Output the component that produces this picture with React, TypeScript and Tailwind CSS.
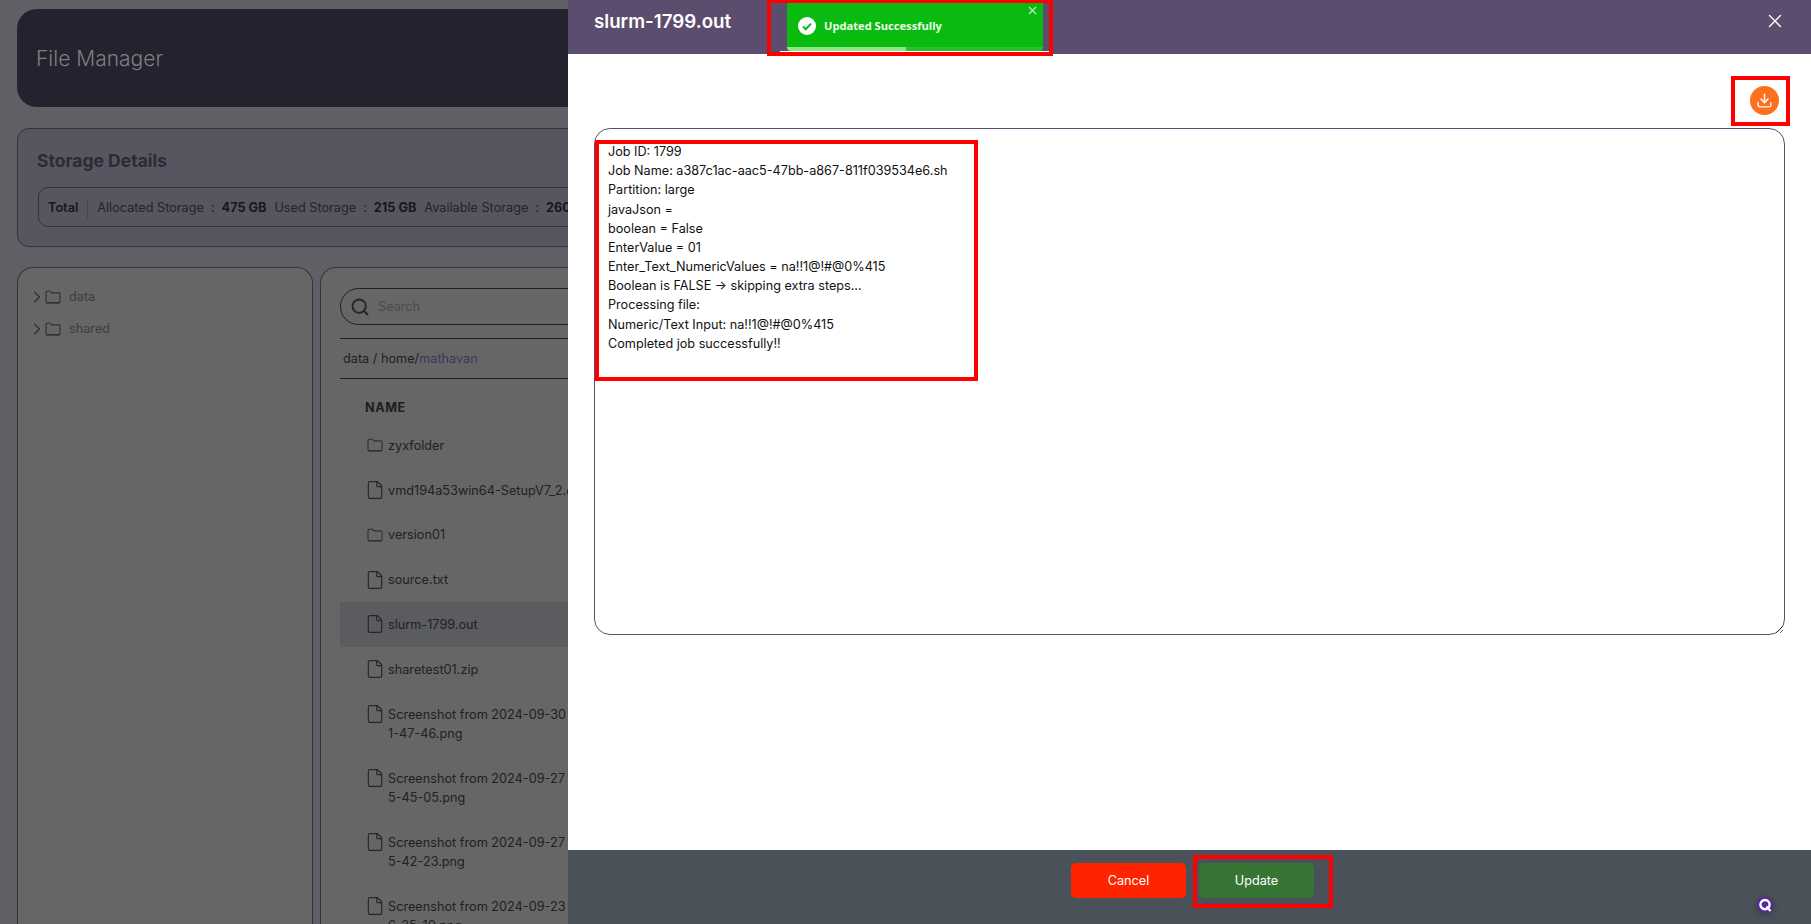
import { ChevronRight, Download, File, Search, X } from "lucide-react";

const jobLog = `Job ID: 1799
Job Name: a387c1ac-aac5-47bb-a867-811f039534e6.sh
Partition: large
javaJson =
boolean = False
EnterValue = 01
Enter_Text_NumericValues = na!!1@!#@0%415
Boolean is FALSE → skipping extra steps...
Processing file:
Numeric/Text Input: na!!1@!#@0%415
Completed job successfully!!
`;

const files = [
  { name: ["zyxfolder"], folder: true },
  { name: ["vmd194a53win64-SetupV7_2.exe"] },
  { name: ["version01"], folder: true },
  { name: ["source.txt"] },
  { name: ["slurm-1799.out"], active: true },
  { name: ["sharetest01.zip"] },
  { name: ["Screenshot from 2024-09-30 1", "1-47-46.png"] },
  { name: ["Screenshot from 2024-09-27 1", "5-45-05.png"] },
  { name: ["Screenshot from 2024-09-27 1", "5-42-23.png"] },
  { name: ["Screenshot from 2024-09-23 1", "6-25-10.png"] },
];

const FolderIcon = () => (
  <svg width="16" height="14" viewBox="0 0 16 14" fill="none" stroke="#2f2f36" strokeWidth="1.1" className="shrink-0">
    <path d="M1 2.2c0-.6.4-1 1-1h3.6l1.2 1.7H14c.6 0 1 .4 1 1v7.9c0 .6-.4 1-1 1H2c-.6 0-1-.4-1-1z" />
    <path d="M1.4 12.9h13.2" strokeWidth="1.3" />
  </svg>
);

const StorageItem = ({ label, value }: { label: string; value: string }) => (
  <span className="flex items-center gap-[6px] mr-[8px] whitespace-nowrap">
    <span className="text-[#232328]">{label}</span>
    <span className="text-[#232328] mx-px">:</span>
    <span className="font-bold text-[#17171b]">{value}</span>
  </span>
);

const Annotation = ({ className }: { className: string }) => (
  <div className={`absolute border-4 border-[#ff0000] pointer-events-none ${className}`} />
);

export default function App() {
  return (
    <div className="relative h-[924px] w-full overflow-hidden bg-[#5f5f66] font-['Inter',sans-serif]">
      {/* page behind the drawer */}
      <div className="flex h-full flex-col pl-[17px] pt-[9px] pr-[20px]">
        <div className="flex h-[98px] shrink-0 items-center rounded-[20px] bg-[#24222e] pl-[19px]">
          <h1 className="pt-[2px] text-[21px] font-light text-[#7f7f84]">File Manager</h1>
        </div>

        <div className="mt-[21px] h-[119px] shrink-0 rounded-[12px] border border-[#33323f] bg-[#575560] pl-[20px] pt-[19px]">
          <h2 className="-ml-px text-[17.5px] leading-[26px] font-bold text-[#2c2a36]">Storage Details</h2>
          <div className="mt-[13px] flex h-[40px] items-center rounded-[10px] border border-[#33323f] pl-[9px] pt-[2px] text-[12.7px]">
            <span className="font-semibold text-[#17171b]">Total</span>
            <span className="mx-[9px] h-[19px] w-px bg-[#45444f]" />
            <StorageItem label="Allocated Storage" value="475 GB" />
            <StorageItem label="Used Storage" value="215 GB" />
            <StorageItem label="Available Storage" value="260 GB" />
          </div>
        </div>

        <div className="mt-[20px] flex flex-1 gap-[7px]">
          <div className="w-[296px] shrink-0 rounded-t-[16px] border border-b-0 border-[#33323f] bg-[#666666] pl-[9px] pt-[13px] text-[12.7px] text-[#3d3d44]">
            {["data", "shared"].map((item) => (
              <div key={item} className="flex h-[32px] items-center">
                <ChevronRight size={20} strokeWidth={1.4} className="mr-[-2px] text-[#2f2f36]" />
                <FolderIcon />
                <span className="ml-[8px]">{item}</span>
              </div>
            ))}
          </div>

          <div className="flex-1 rounded-t-[16px] border border-b-0 border-[#33323f] bg-[#666666] px-[19px] pt-[20px] text-[12.7px]">
            <div className="flex h-[37px] items-center rounded-full border border-[#1f1f25] pl-[9px]">
              <Search size={20} strokeWidth={2.2} className="text-[#24242a]" />
              <span className="ml-[8px] text-[#4b4b50]">Search</span>
            </div>
            <div className="mt-[13px] flex h-[41px] items-center border-y border-[#1f1f25] pl-[3px] text-[#1e1e22]">
              data / home/<span className="text-[#3f3560]">mathavan</span>
            </div>
            <div className="pl-[25px] pt-[19px] pb-[6px] text-[12.7px] leading-[19px] font-bold tracking-[0.5px] text-[#1d1d22]">
              NAME
            </div>
            {files.map((f) => (
              <div
                key={f.name.join("")}
                className={`flex items-start py-[12.8px] pl-[27px] leading-[19.2px] text-[#202025] ${f.active ? "bg-[#5b5c5f]" : ""}`}
              >
                <span className="flex h-[19px] w-[21px] shrink-0 items-center">
                  {f.folder ? <FolderIcon /> : <File size={20} strokeWidth={1.4} className="-ml-[2px] text-[#26262c]" />}
                </span>
                <span className="whitespace-nowrap">
                  {f.name.map((line) => (
                    <span key={line} className="block">
                      {line}
                    </span>
                  ))}
                </span>
              </div>
            ))}
          </div>
        </div>
      </div>

      {/* drawer */}
      <div className="absolute inset-y-0 right-0 flex w-[1243px] flex-col bg-white">
        <div className="flex h-[54px] shrink-0 items-start justify-between bg-[#5c4d6e] pl-[26px] pr-[25px]">
          <h3 className="pt-[10px] text-[18.72px] leading-[24px] font-semibold text-white">slurm-1799.out</h3>
          <X size={22} strokeWidth={1.5} className="mt-[10px] text-white" />
        </div>

        <div className="flex flex-1 flex-col px-[26px]">
          <div className="flex justify-end pr-[6px] pt-[32px]">
            <div className="flex h-[29px] w-[29px] items-center justify-center rounded-full bg-[#ff6f20]">
              <Download size={17} strokeWidth={2} className="text-white" />
            </div>
          </div>
          <textarea
            readOnly
            defaultValue={jobLog}
            className="mt-[13px] h-[507px] w-full rounded-[16px] border border-[#5c4d6e] px-[13px] pt-[13px] text-[12.65px] leading-[19.17px] text-[#111111] outline-none"
          />
        </div>

        <div className="flex h-[74px] shrink-0 items-start justify-center gap-[13px] bg-[#4b5159] pl-[6px] pt-[13px] text-[12.7px] text-white">
          <button className="h-[35px] w-[115px] rounded-[5px] bg-[#ff2400]">Cancel</button>
          <button className="h-[35px] w-[115px] rounded-[5px] bg-[#377535]">Update</button>
        </div>
      </div>

      {/* toast */}
      <div className="absolute left-[787px] top-[3px] h-[48px] w-[256px] overflow-hidden rounded-b-[4px] bg-[#0abb0f] font-['Open_Sans',sans-serif]">
        <div className="flex h-[44px] items-center pl-[11px] pt-[1px]">
          <svg width="18" height="18" viewBox="0 0 18 18" className="shrink-0">
            <circle cx="9" cy="9" r="9" fill="#ffffff" />
            <path d="M5 9.4l2.8 2.8L13 6.6" fill="none" stroke="#0abb0f" strokeWidth="2" />
          </svg>
          <span className="ml-[8px] pt-[2px] text-[11.15px] font-bold text-[#ecfbe9]">Updated Successfully</span>
        </div>
        <X size={13} strokeWidth={2} className="absolute right-[4px] top-[1px] text-[#c9f1c8]" />
        <div className="flex h-[4px]">
          <div className="w-[119px] bg-[#8ee58e]" />
          <div className="flex-1 bg-[#28c22c]" />
        </div>
      </div>
      <div className="absolute left-[780px] top-[51px] h-px w-[270px] bg-white" />

      {/* Q widget */}
      <svg
        width="18"
        height="18"
        viewBox="0 0 18 18"
        className="absolute left-[1756px] top-[896px] drop-shadow-[0_1px_3px_rgba(0,0,0,0.3)]"
      >
        <circle cx="9" cy="9" r="8" fill="#56299c" />
        <circle cx="9" cy="8.6" r="4.6" fill="none" stroke="#ffffff" strokeWidth="2.4" />
        <path d="M10.5 10.5l4 4.5" stroke="#ffffff" strokeWidth="2.2" />
      </svg>

      {/* red review marks */}
      <Annotation className="left-[767px] top-[-1px] h-[57px] w-[286px]" />
      <Annotation className="left-[1731px] top-[76px] h-[50px] w-[59px]" />
      <Annotation className="left-[595px] top-[140px] h-[241px] w-[383px]" />
      <Annotation className="left-[1193px] top-[855px] h-[53px] w-[140px]" />
    </div>
  );
}
